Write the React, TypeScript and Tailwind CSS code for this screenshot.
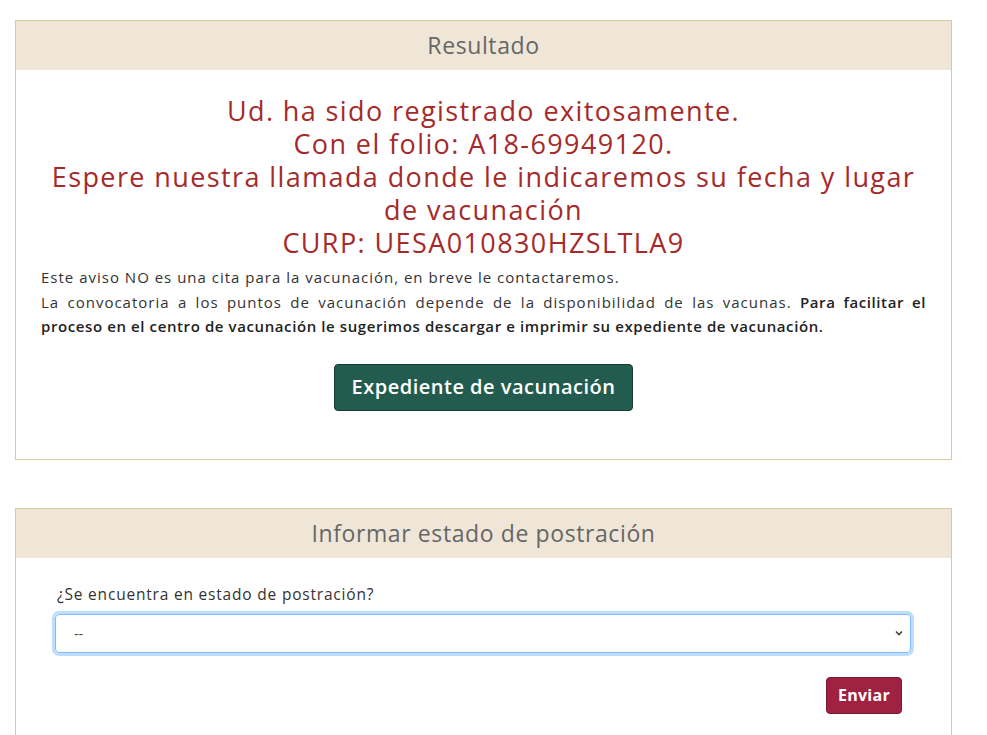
import React from "react";

const font = { fontFamily: '"Open Sans", "Liberation Sans", sans-serif' };

export default function App() {
  return (
    <div className="min-h-[735px] bg-white pt-[20px]" style={font}>
      <div className="ml-[15px] w-[937px] border border-[#dcc8a0]">
        <div className="flex h-[49px] items-center justify-center bg-[#efe6d8] text-[23px] tracking-[0.6px] text-[#666666]">
          Resultado
        </div>
        <div className="px-[25px] pt-[24px] pb-[48px]">
          <div className="text-center text-[27px] leading-[33px] tracking-[1.4px] text-[#a52a2a]">
            <div>Ud. ha sido registrado exitosamente.</div>
            <div>Con el folio: A18-69949120.</div>
            <div>Espere nuestra llamada donde le indicaremos su fecha y lugar</div>
            <div>de vacunación</div>
            <div>CURP: UESA010830HZSLTLA9</div>
          </div>
          <p className="mt-[6px] text-justify text-[15px] leading-[24.5px] tracking-[1px] text-[#333333]">
            Este aviso NO es una cita para la vacunación, en breve le contactaremos.
            <br />
            La convocatoria a los puntos de vacunación depende de la disponibilidad de las vacunas.{" "}
            <b className="font-semibold tracking-[0.6px] text-[#222222]">
              Para facilitar el proceso en el centro de vacunación le sugerimos descargar e imprimir su expediente de vacunación.
            </b>
          </p>
          <div className="mt-[25px] flex justify-center">
            <button className="h-[47px] w-[299px] rounded-[4px] border border-[#163c33] bg-[#235b4e] text-[20px] font-semibold tracking-[0.5px] text-white">
              Expediente de vacunación
            </button>
          </div>
        </div>
      </div>

      <div className="ml-[15px] mt-[48px] w-[937px] border border-b-0 border-[#dcc8a0]">
        <div className="flex h-[49px] items-center justify-center bg-[#efe6d8] text-[23px] tracking-[0.6px] text-[#666666]">
          Informar estado de postración
        </div>
        <div className="pl-[39px] pr-[40px] pt-[25px] pb-[30px]">
          <label className="ml-[2px] block text-[15.5px] leading-[22px] tracking-[0.8px] text-[#333333]">
            ¿Se encuentra en estado de postración?
          </label>
          <div className="mt-[9px] flex h-[39px] items-center justify-between rounded-[4px] border border-[#80bdff] pl-[18px] pr-[6px] text-[14px] text-[#444444] shadow-[0_0_0_3px_rgba(0,123,255,0.25)]">
            <span>--</span>
            <svg width="10" height="10" viewBox="0 0 10 10" fill="none" stroke="#444" strokeWidth="1.6">
              <path d="M2 3.5 L5 6.5 L8 3.5" />
            </svg>
          </div>
          <div className="mt-[24px] flex justify-end pr-[9px]">
            <button className="h-[37px] w-[76px] rounded-[4px] border border-[#7a1a32] bg-[#9f2241] text-[16px] font-bold tracking-[0.3px] text-white">
              Enviar
            </button>
          </div>
        </div>
      </div>
    </div>
  );
}
